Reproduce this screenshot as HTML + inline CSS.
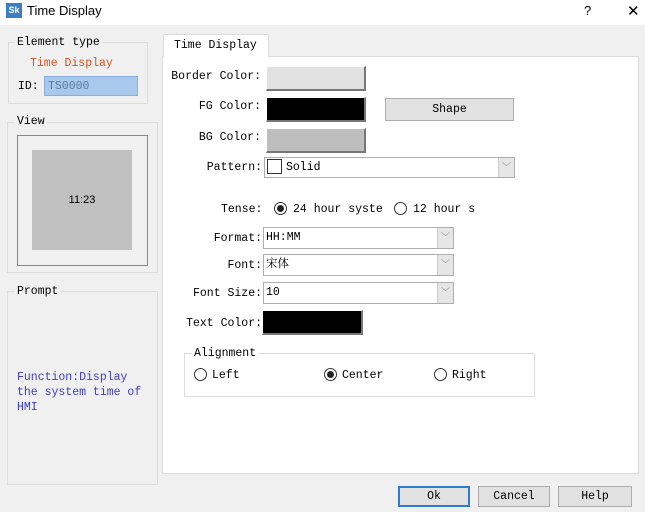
<!DOCTYPE html>
<html><head><meta charset="utf-8"><style>
*{box-sizing:border-box;margin:0;padding:0}
body{width:645px;height:512px;background:#f0f0f0;position:relative;overflow:hidden;font-family:"Liberation Mono","Noto Serif CJK SC",monospace;font-size:11.5px;color:#000}
.a{position:absolute;white-space:nowrap}
.grp{position:absolute;border:1px solid #dcdcdc}
.lg{position:absolute;background:#f0f0f0;padding:0 2px;line-height:12px}
.lgw{position:absolute;background:#fff;padding:0 2px;line-height:12px}
.lab{position:absolute;text-align:right;line-height:14px}
.btn{position:absolute;border:1px solid #adadad;background:#e1e1e1;text-align:center}
.cb{position:absolute;border:1px solid #adadad;background:#fff;line-height:20px;padding-left:2px}
.cb .dd{position:absolute;right:0;top:0;width:16px;height:100%;background:#e6e6e6;border-left:1px solid #ccc;color:#666;font-size:9px;text-align:center;line-height:20px}
.sw{position:absolute;border-right:2px solid #777;border-bottom:2px solid #777;border-top:1px solid #fff;border-left:1px solid #fff}
.r{position:absolute;width:13px;height:13px;border:1px solid #333;border-radius:50%;background:#fff}
.r.on::after{content:"";position:absolute;left:2px;top:2px;width:7px;height:7px;border-radius:50%;background:#222}
</style></head><body>
<div class="a" style="left:0;top:0;width:645px;height:25px;background:#fff"></div>
<div class="a" style="left:6px;top:3px;width:16px;height:15px;background:#3a7fc4;color:#fff;font:bold 9px 'Liberation Sans',sans-serif;line-height:15px;text-align:center">Sk</div>
<div class="a" style="left:27px;top:3px;font:13px 'Liberation Sans',sans-serif">Time Display</div>
<div class="a" style="left:584px;top:3px;font:13px 'Liberation Sans',sans-serif">?</div>
<div class="a" style="left:627px;top:2px;font:15px 'Liberation Sans',sans-serif;font-weight:300">✕</div>

<div class="grp" style="left:8px;top:42px;width:140px;height:62px"></div>
<div class="lg" style="left:15px;top:37px">Element type</div>
<div class="a" style="left:30px;top:57px;color:#d2521e">Time Display</div>
<div class="a" style="left:18px;top:80px">ID:</div>
<div class="a" style="left:44px;top:76px;width:94px;height:20px;background:#a9c9ec;border:1px solid #8aaedb;color:#5a7aa0;padding-left:3px;line-height:19px">TS0000</div>

<div class="grp" style="left:7px;top:122px;width:151px;height:151px"></div>
<div class="lg" style="left:15px;top:116px">View</div>
<div class="a" style="left:17px;top:135px;width:131px;height:131px;border:1px solid #888"></div>
<div class="a" style="left:32px;top:150px;width:100px;height:100px;background:#c0c0c0;text-align:center;line-height:100px;font-family:'Liberation Sans',sans-serif;font-size:11px">11:23</div>

<div class="grp" style="left:7px;top:291px;width:151px;height:194px"></div>
<div class="lg" style="left:15px;top:286px">Prompt</div>
<div class="a" style="left:17px;top:370px;color:#3c3cc8;line-height:15px">Function:Display<br>the system time of<br>HMI</div>

<div class="a" style="left:162px;top:56px;width:477px;height:418px;background:#fff;border:1px solid #dcdcdc"></div>
<div class="a" style="left:163px;top:34px;width:106px;height:23px;background:#fff;border:1px solid #dcdcdc;border-bottom:none;padding-left:10px;line-height:22px">Time Display</div>

<div class="lab" style="left:160px;width:101px;top:70px">Border Color:</div>
<div class="sw" style="left:266px;top:66px;width:100px;height:25px;background:#e1e1e1"></div>
<div class="lab" style="left:160px;width:101px;top:100px">FG Color:</div>
<div class="sw" style="left:266px;top:97px;width:100px;height:25px;background:#000"></div>
<div class="btn" style="left:385px;top:98px;width:129px;height:23px;line-height:22px">Shape</div>
<div class="lab" style="left:160px;width:101px;top:131px">BG Color:</div>
<div class="sw" style="left:266px;top:128px;width:100px;height:25px;background:#bebebe"></div>
<div class="lab" style="left:160px;width:102px;top:161px">Pattern:</div>
<div class="cb" style="left:264px;top:157px;width:251px;height:21px;line-height:19px"><span style="display:inline-block;width:15px;height:15px;border:1px solid #333;vertical-align:-4px;margin-right:4px"></span>Solid<div class="dd">﹀</div></div>

<div class="a" style="left:221px;top:203px">Tense:</div>
<div class="r on" style="left:274px;top:202px"></div>
<div class="a" style="left:293px;top:203px">24 hour syste</div>
<div class="r" style="left:394px;top:202px"></div>
<div class="a" style="left:413px;top:203px">12 hour s</div>

<div class="lab" style="left:160px;width:102px;top:232px">Format:</div>
<div class="cb" style="left:263px;top:227px;width:191px;height:22px">HH:MM<div class="dd">﹀</div></div>
<div class="lab" style="left:160px;width:102px;top:259px">Font:</div>
<div class="cb" style="left:263px;top:254px;width:191px;height:22px">宋体<div class="dd">﹀</div></div>
<div class="lab" style="left:160px;width:102px;top:287px">Font Size:</div>
<div class="cb" style="left:263px;top:282px;width:191px;height:22px">10<div class="dd">﹀</div></div>
<div class="lab" style="left:160px;width:102px;top:317px">Text Color:</div>
<div class="sw" style="left:262px;top:310px;width:101px;height:25px;background:#000"></div>

<div class="grp" style="left:184px;top:353px;width:351px;height:44px"></div>
<div class="lgw" style="left:192px;top:348px">Alignment</div>
<div class="r" style="left:194px;top:368px"></div>
<div class="a" style="left:212px;top:369px">Left</div>
<div class="r on" style="left:324px;top:368px"></div>
<div class="a" style="left:342px;top:369px">Center</div>
<div class="r" style="left:434px;top:368px"></div>
<div class="a" style="left:452px;top:369px">Right</div>

<div class="btn" style="left:398px;top:486px;width:72px;height:21px;line-height:18px;border:2px solid #2e7bcf">Ok</div>
<div class="btn" style="left:478px;top:486px;width:72px;height:21px;line-height:20px">Cancel</div>
<div class="btn" style="left:558px;top:486px;width:74px;height:21px;line-height:20px">Help</div>
</body></html>
